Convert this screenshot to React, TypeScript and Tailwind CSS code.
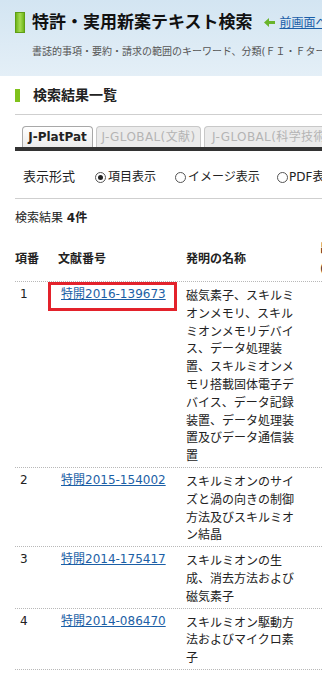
import React from 'react'

type Row = { no: number; doc: string; title: string; marked?: boolean }

const rows: Row[] = [
  {
    no: 1,
    doc: '特開2016-139673',
    title:
      '磁気素子、スキルミオンメモリ、スキルミオンメモリデバイス、データ処理装置、スキルミオンメモリ搭載固体電子デバイス、データ記録装置、データ処理装置及びデータ通信装置',
    marked: true,
  },
  { no: 2, doc: '特開2015-154002', title: 'スキルミオンのサイズと渦の向きの制御方法及びスキルミオン結晶' },
  { no: 3, doc: '特開2014-175417', title: 'スキルミオンの生成、消去方法および磁気素子' },
  { no: 4, doc: '特開2014-086470', title: 'スキルミオン駆動方法およびマイクロ素子' },
]

const Radio = ({ checked }: { checked?: boolean }) => (
  <span className="w-[11px] h-[11px] rounded-full border border-[#555] bg-white flex items-center justify-center shrink-0">
    {checked && <span className="w-[5px] h-[5px] rounded-full bg-[#222]" />}
  </span>
)

const App: React.FC = () => {
  return (
    <div className="w-[322px] min-h-[688px] bg-white overflow-hidden text-[#222] font-['DejaVu_Sans','Noto_Sans_CJK_JP',sans-serif]">
      {/* ヘッダー */}
      <header className="h-[76px] bg-gradient-to-b from-[#d3e5f2] to-[#e4eff7] pl-[15px] pt-[12px] whitespace-nowrap">
        <div className="flex items-center">
          <span className="w-[10px] h-[21px] bg-gradient-to-r from-[#6fb514] via-[#a6dc52] to-[#6fb514] border border-[#5f9e16] shrink-0" />
          <h1 className="ml-[7px] text-[17px] font-bold leading-[21px] text-[#111]">特許・実用新案テキスト検索</h1>
          <svg className="ml-[11px] shrink-0" width="11" height="9" viewBox="0 0 11 9">
            <polygon points="0,4.5 5,0 5,3 11,3 11,6 5,6 5,9" fill="#6ab42c" />
          </svg>
          <a href="#" className="ml-[5px] text-[12px] leading-[16px] text-[#1a5ea8] underline">
            前画面へ戻る
          </a>
        </div>
        <p className="mt-[12px] ml-[17px] text-[10px] leading-[14px] text-[#555]">
          書誌的事項・要約・請求の範囲のキーワード、分類(ＦＩ・Ｆターム)等を指定して検索できます。
        </p>
      </header>

      <main className="pl-[15px]">
        {/* 見出し */}
        <div className="mt-[9px] flex items-center h-[20px]">
          <span className="w-[5px] h-[13px] bg-[#80c21c]" />
          <h2 className="ml-[13px] text-[14px] font-bold leading-[20px]">検索結果一覧</h2>
        </div>
        <div className="mt-[9px] h-px bg-[#cfcfcf]" />

        {/* タブ */}
        <div className="mt-[11px] pl-[7px] flex items-end gap-[3px] whitespace-nowrap">
          <div className="h-[21px] w-[71px] shrink-0 rounded-t-[4px] border border-b-0 border-[#a8a8a8] bg-gradient-to-b from-white to-[#ececec] flex items-center justify-center text-[12px] font-bold">
            J-PlatPat
          </div>
          <div className="h-[21px] w-[105px] shrink-0 rounded-t-[4px] border border-b-0 border-[#c8c8c8] bg-[#ebebeb] flex items-center justify-center text-[12px] tracking-[0.4px] text-[#b4b4b4]">
            J-GLOBAL(文献)
          </div>
          <div className="h-[21px] w-[150px] shrink-0 rounded-t-[4px] border border-b-0 border-[#c8c8c8] bg-[#ebebeb] flex items-center pl-[7px] text-[12px] tracking-[0.4px] text-[#b4b4b4]">
            J-GLOBAL(科学技術用語)
          </div>
        </div>
        <div className="h-[4px] bg-[#333]" />

        {/* 表示形式 */}
        <div className="mt-[16px] pl-[8px] h-[20px] flex items-center text-[12px] whitespace-nowrap">
          <span className="text-[13px] w-[72px] shrink-0">表示形式</span>
          <span className="flex items-center gap-[2px] w-[80px] shrink-0">
            <Radio checked />
            項目表示
          </span>
          <span className="flex items-center gap-[2px] w-[102px] shrink-0">
            <Radio />
            イメージ表示
          </span>
          <span className="flex items-center gap-[1px] shrink-0">
            <Radio />
            PDF表示
          </span>
        </div>
        <div className="mt-[11px] h-px bg-[#cfcfcf]" />

        <p className="mt-[10px] text-[12px] leading-[18px]">
          検索結果 <span className="font-bold">4件</span>
        </p>

        {/* 一覧 */}
        <div className="mt-[9px] text-[12px]">
          <div className="flex items-center h-[46px] font-bold border-b border-dotted border-[#b8b8b8] whitespace-nowrap">
            <div className="w-[43px] shrink-0">項番</div>
            <div className="w-[128px] shrink-0">文献番号</div>
            <div className="w-[134px] shrink-0">発明の名称</div>
            <div className="shrink-0 leading-[21px]">
              <div>出願人</div>
              <div className="font-normal">(権利者)</div>
            </div>
          </div>
          {rows.map((r) => (
            <div key={r.no} className="flex border-b border-dotted border-[#b8b8b8] leading-[17.8px] pt-[4px] pb-[3px]">
              <div className="w-[43px] shrink-0 pl-[5px]">{r.no}</div>
              <div className="w-[128px] shrink-0 pl-[3px] relative">
                <a href="#" className="text-[#1c5fa6] underline whitespace-nowrap">
                  {r.doc}
                </a>
                {r.marked && (
                  <span className="absolute left-[-10px] top-[-4px] w-[129px] h-[29px] border-[3px] border-[#e3222b]" />
                )}
              </div>
              <div className="w-[110px] shrink-0 font-['Noto_Sans_CJK_JP',sans-serif]">{r.title}</div>
            </div>
          ))}
        </div>
      </main>
    </div>
  )
}

export default App
